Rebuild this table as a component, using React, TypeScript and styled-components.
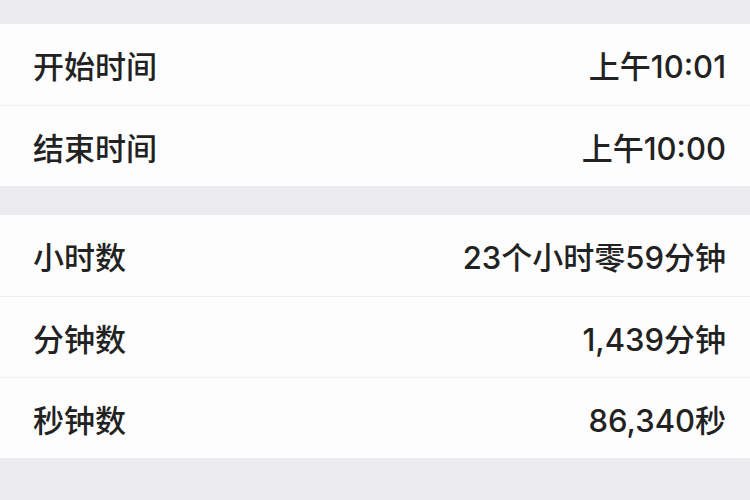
import React from "react";
import styled, { createGlobalStyle } from "styled-components";

const Global = createGlobalStyle`
  html, body { margin: 0; padding: 0; background: #ececf0; }
  body { font-family: Inter, "Noto Sans CJK SC", sans-serif; }
`;

const Page = styled.div`
  width: 750px;
  height: 500px;
  background: #ececf0;
  padding-top: 24px;
  box-sizing: border-box;
  display: flex;
  flex-direction: column;
  gap: 29px;
  overflow: hidden;
`;

const Section = styled.div`
  background: #fdfdfd;
  display: flex;
  flex-direction: column;
`;

const Row = styled.div`
  height: 81px;
  box-sizing: border-box;
  display: flex;
  align-items: center;
  justify-content: space-between;
  padding: 0 24px 0 33px;
  font-size: 31px;
  font-weight: 500;
  color: #222;
  & + & {
    border-top: 1px solid #f0f0f2;
  }
`;

const Label = styled.span``;
const Value = styled.span``;

const rows1 = [
  ["开始时间", "上午10:01"],
  ["结束时间", "上午10:00"],
];
const rows2 = [
  ["小时数", "23个小时零59分钟"],
  ["分钟数", "1,439分钟"],
  ["秒钟数", "86,340秒"],
];

export default function App() {
  return (
    <>
      <Global />
      <Page>
        <Section>
          {rows1.map(([l, v]) => (
            <Row key={l}>
              <Label>{l}</Label>
              <Value>{v}</Value>
            </Row>
          ))}
        </Section>
        <Section>
          {rows2.map(([l, v]) => (
            <Row key={l}>
              <Label>{l}</Label>
              <Value>{v}</Value>
            </Row>
          ))}
        </Section>
      </Page>
    </>
  );
}
